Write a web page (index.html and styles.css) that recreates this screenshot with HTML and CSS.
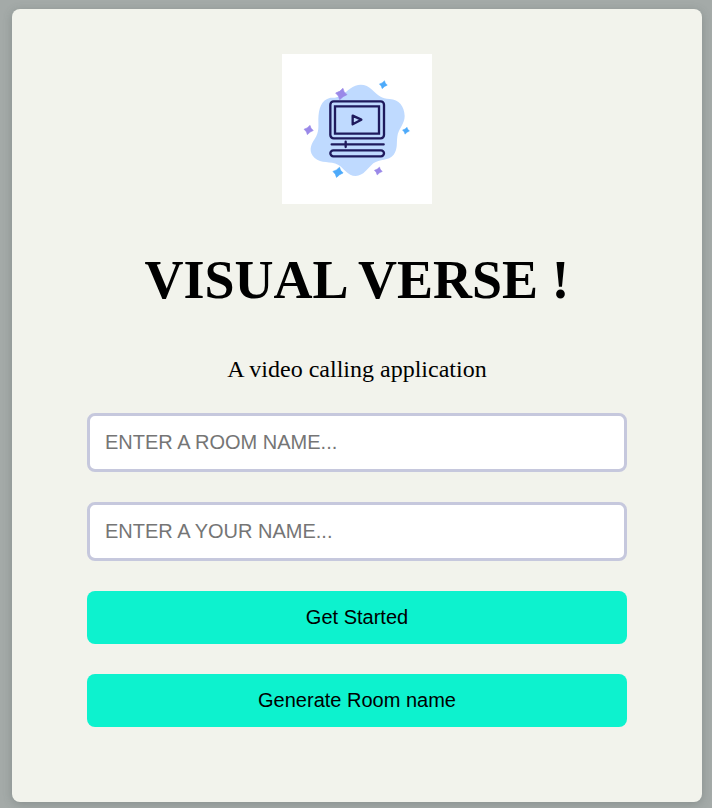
FILE: index.html
```html
<!DOCTYPE html>
<html lang="en">
<head>
  <meta charset="utf-8">
  <meta name="viewport" content="width=device-width, initial-scale=1">
  <title>Visual Verse</title>
  <link rel="stylesheet" href="styles.css">
</head>
<body>
  <main class="card">
    <svg class="logo" viewBox="15 17 450 450" role="img" aria-label="Visual Verse logo">
      <defs>
        <path id="sparkle" d="M5 -17 Q6 -6 17 2 Q5 6 -5 17 Q-6 6 -17 -3 Q-4 -6 5 -17Z" stroke-width="2" stroke-linejoin="round"/>
      </defs>
      <path fill="#bfdaff" d="M160 148C185 151 201 135 219 121C243 103 267 106 286 125C304 142 314 151 338 152C366 153 382 174 383 203C383 228 364 241 361 265C358 285 363 300 350 319C335 339 308 330 289 345C272 359 260 383 236 383C212 383 200 358 183 349C161 337 132 347 113 329C95 312 99 292 113 272C127 252 124 234 124 213C125 181 132 155 160 148Z"/>
      <g fill="none" stroke="#1f1a5d" stroke-width="7" stroke-linecap="round" stroke-linejoin="round">
        <rect x="160" y="159" width="161" height="111" rx="10"/>
        <path stroke-linejoin="miter" d="M174 174H306V256H174Z"/>
        <path d="M227 202L253 214L227 228Z"/>
        <path d="M164 288H320M206 280V296"/>
        <rect x="160" y="306" width="161" height="18" rx="9"/>
      </g>
      <g fill="#9a88e8" stroke="#9a88e8">
        <use href="#sparkle" transform="translate(193 137)"/>
        <use href="#sparkle" transform="translate(95 245) scale(.82)"/>
        <use href="#sparkle" transform="translate(304 368) scale(.7)"/>
      </g>
      <g fill="#4daafa" stroke="#4daafa">
        <use href="#sparkle" transform="translate(319 109) scale(.7)"/>
        <use href="#sparkle" transform="translate(387 247) scale(.62)"/>
        <use href="#sparkle" transform="translate(183 372) scale(.9)"/>
      </g>
    </svg>
    <h1 class="title">VISUAL VERSE !</h1>
    <p class="tagline">A video calling application</p>
    <form class="form">
      <input class="field" type="text" placeholder="ENTER A ROOM NAME..." aria-label="Room name">
      <input class="field" type="text" placeholder="ENTER A YOUR NAME..." aria-label="Your name">
      <button class="button" type="submit">Get Started</button>
      <button class="button" type="button">Generate Room name</button>
    </form>
  </main>
</body>
</html>
```
FILE: styles.css
```css
* {
  box-sizing: border-box;
}

body {
  margin: 0;
  padding: 9px 10px 6px 12px;
  background: #a4aaa8;
  color: #000;
  font-family: "Liberation Serif", "Times New Roman", serif;
}

.card {
  display: flex;
  flex-direction: column;
  align-items: center;
  padding: 45px 75px 75px;
  background: #f2f3ec;
  border-radius: 8px;
  box-shadow: 0 2px 10px rgba(70, 80, 80, 0.3);
}

.logo {
  width: 150px;
  height: 150px;
  background: #fff;
}

.title {
  margin: 44px 0;
  font-size: 54px;
  line-height: 64px;
  text-align: center;
}

.tagline {
  margin: 0 0 30px;
  font-size: 24px;
  line-height: 27px;
  text-align: center;
}

.form {
  display: flex;
  flex-direction: column;
  gap: 30px;
  width: 100%;
}

.field,
.button {
  width: 100%;
  padding: 15px;
  border-radius: 8px;
  font-family: "Liberation Sans", Arial, sans-serif;
  font-size: 20px;
  line-height: 23px;
}

.field {
  height: 59px;
  border: 3px solid #c6c8dd;
  background: #fff;
}

.field::placeholder {
  color: #757575;
}

.button {
  border: 0;
  background: #0df2ce;
  color: #000;
  cursor: pointer;
}
```
